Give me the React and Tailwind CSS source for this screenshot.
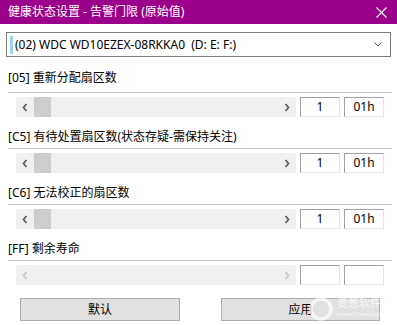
import React from "react";

const FONT = { fontFamily: '"Noto Sans", "Noto Sans CJK SC", sans-serif' };

function Chevron({ dir, color }) {
  return (
    <svg width="6" height="9" viewBox="0 0 6 9">
      {dir === "left" ? (
        <path d="M4.5 1 L1.5 4.5 L4.5 8" fill="none" stroke={color} strokeWidth="1.8" />
      ) : (
        <path d="M1.5 1 L4.5 4.5 L1.5 8" fill="none" stroke={color} strokeWidth="1.8" />
      )}
    </svg>
  );
}

function Row({ disabled, v1, v2 }) {
  const arrow = disabled ? "#c8c8c8" : "#606060";
  return (
    <div className="flex h-[20px] items-stretch gap-[4px] pl-[16px]">
      <div className="flex w-[280px] items-center bg-[#f0f0f0]">
        <div className="flex w-[18px] items-center justify-center">
          <Chevron dir="left" color={arrow} />
        </div>
        {!disabled && <div className="h-full w-[17px] bg-[#cdcdcd]" />}
        <div className="flex-1" />
        <div className="flex w-[18px] items-center justify-center">
          <Chevron dir="right" color={arrow} />
        </div>
      </div>
      <div className="flex w-[40px] items-center justify-center border-t border-l border-r border-b border-t-[#a0a0a0] border-l-[#a0a0a0] border-r-[#e6e6e6] border-b-[#e6e6e6] text-[12px] leading-none text-black">
        {v1}
      </div>
      <div className="flex w-[40px] items-center justify-center border-t border-l border-r border-b border-t-[#a0a0a0] border-l-[#a0a0a0] border-r-[#e6e6e6] border-b-[#e6e6e6] text-[12px] leading-none text-black">
        {v2}
      </div>
    </div>
  );
}

function Section({ label, first, disabled, v1, v2 }) {
  return (
    <div className="flex flex-col">
      <div
        className={
          first
            ? "pl-[8px] pt-[13px] pb-[6px] text-[12px] leading-[16px] text-black"
            : "pl-[8px] pt-[12px] pb-[3px] text-[12px] leading-[16px] text-black"
        }
      >
        {label}
      </div>
      <div className="ml-[8px] mr-[5px] h-px bg-[#c8c8c8]" />
      <div className="mt-[4px]">
        <Row disabled={disabled} v1={v1} v2={v2} />
      </div>
    </div>
  );
}

export default function App() {
  return (
    <div className="relative h-[325px] w-[397px] overflow-hidden bg-white" style={FONT}>
      <div className="flex h-[24px] items-center justify-between bg-[#9a0089] pl-[8px] pr-[10px]">
        <span className="text-[12px] leading-none text-white">健康状态设置 - 告警门限 (原始值)</span>
        <svg width="11" height="11" viewBox="0 0 11 11">
          <path d="M0.5 0.5 L10.5 10.5 M10.5 0.5 L0.5 10.5" stroke="white" strokeWidth="1.1" />
        </svg>
      </div>
      <div className="mx-[6px] mt-[8px] flex h-[25px] items-center border border-[#7a7a7a] bg-white pl-[3px] pr-[8px]">
        <div className="h-[18px] w-[3px] bg-[#99d1ff]" />
        <span className="ml-[2px] flex-1 text-[12px] leading-none text-black">
          (02) WDC WD10EZEX-08RKKA0&nbsp;&nbsp;(D: E: F:)
        </span>
        <svg width="8" height="5" viewBox="0 0 8 5">
          <path d="M0.5 0.5 L4 4 L7.5 0.5" fill="none" stroke="#505050" strokeWidth="1" />
        </svg>
      </div>
      <Section first label="[05] 重新分配扇区数" v1="1" v2="01h" />
      <Section label="[C5] 有待处置扇区数(状态存疑-需保持关注)" v1="1" v2="01h" />
      <Section label="[C6] 无法校正的扇区数" v1="1" v2="01h" />
      <Section label="[FF] 剩余寿命" disabled v1="" v2="" />
      <div className="mt-[13px] flex gap-[41px] pl-[20px]">
        <div className="flex h-[23px] w-[160px] items-center justify-center border border-[#adadad] bg-[#e1e1e1] text-[12px] text-black">
          默认
        </div>
        <div className="flex h-[23px] w-[159px] items-center justify-center border border-[#adadad] bg-[#e1e1e1] text-[12px] text-black">
          应用
        </div>
      </div>
      <div className="pointer-events-none absolute left-[308px] top-[296px] flex items-start gap-[3px] opacity-75">
        <svg width="26" height="26" viewBox="0 0 26 26">
          <circle cx="13" cy="13" r="10" fill="none" stroke="white" strokeWidth="3.5" />
        </svg>
        <div className="flex flex-col">
          <span className="text-[11px] leading-[14px] text-white">麦葱软件</span>
          <span className="text-[6px] leading-[8px] text-white">www.52maicong</span>
        </div>
      </div>
    </div>
  );
}
